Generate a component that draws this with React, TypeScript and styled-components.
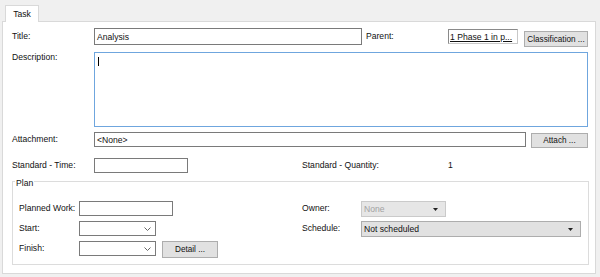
import React from 'react'
import styled, { createGlobalStyle } from 'styled-components'

const GlobalStyle = createGlobalStyle`
  html, body {
    margin : 0;
    padding : 0;
    background : #f0f0f0;
  }
  body {
    font-family : "Liberation Sans", Arial, sans-serif;
    font-size : 8.6px;
    color : #111;
  }
`

const Window = styled.div`
  width : 600px;
  height : 277px;
  box-sizing : border-box;
  padding : 5px 0 0 2px;
  background : #f0f0f0;
`

const TabStrip = styled.div`
  display : flex;
  padding-left : 3px;
  height : 17px;
  margin-bottom : -1px;
  position : relative;
  z-index : 1;
`

const Tab = styled.div`
  width : 34px;
  height : 17px;
  box-sizing : border-box;
  background : #fff;
  border : 1px solid #d9d9d9;
  border-bottom : none;
  display : flex;
  align-items : center;
  justify-content : center;
`

const Panel = styled.div`
  width : 594px;
  height : 253px;
  box-sizing : border-box;
  background : #fff;
  border : 1px solid #d9d9d9;
  padding : 6px 0 0 9px;
`

const Row = styled.div<{ $h: number, $mt?: number }>`
  display : flex;
  align-items : flex-start;
  height : ${props => props.$h}px;
  margin-top : ${props => props.$mt || 0}px;
`

const Label = styled.div<{ $w?: number, $lh?: number, $ml?: number }>`
  width : ${props => props.$w || 82}px;
  flex-shrink : 0;
  line-height : ${props => props.$lh || 15}px;
  margin-left : ${props => props.$ml || 0}px;
  white-space : nowrap;
`

const TextBox = styled.div<{ $w: number, $h?: number }>`
  width : ${props => props.$w}px;
  height : ${props => props.$h || 15}px;
  box-sizing : border-box;
  flex-shrink : 0;
  border : 1px solid #7a7a7a;
  background : #fff;
  padding-left : 2px;
  display : flex;
  align-items : center;
  white-space : nowrap;
`

const LinkBox = styled.div`
  width : 70px;
  height : 15px;
  margin-top : 1px;
  box-sizing : border-box;
  border : 1px solid #8a8a8a;
  border-right-color : #c8c8c8;
  border-bottom-color : #c8c8c8;
  padding-left : 1px;
  display : flex;
  align-items : center;
  text-decoration : underline;
  white-space : nowrap;
  overflow : hidden;
`

const Button = styled.button<{ $w: number, $h?: number, $mt?: number, $ml?: number }>`
  width : ${props => props.$w}px;
  height : ${props => props.$h || 16}px;
  margin : ${props => props.$mt || 0}px 0 0 ${props => props.$ml || 0}px;
  padding : 0;
  flex-shrink : 0;
  box-sizing : border-box;
  background : #e1e1e1;
  border : 1px solid #adadad;
  font-family : inherit;
  font-size : 8.2px;
  color : #111;
  white-space : nowrap;
`

const TextArea = styled.div`
  width : 494px;
  height : 75px;
  box-sizing : border-box;
  border : 1px solid #6fa6de;
  background : #fff;
  padding : 4px 3px;
`

const Caret = styled.span`
  display : block;
  width : 1px;
  height : 9px;
  background : #000;
`

const Value = styled.div`
  line-height : 15px;
`

const GroupBox = styled.div`
  position : relative;
  width : 577px;
  height : 84px;
  margin-top : 8px;
  box-sizing : border-box;
  border : 1px solid #dcdcdc;
  padding : 19px 0 0 6px;
`

const Caption = styled.div`
  position : absolute;
  top : -4px;
  left : 2px;
  padding : 0 1px;
  background : #fff;
  line-height : 11px;
`

const PlanGrid = styled.div`
  display : grid;
  grid-template-columns : 283px 1fr;
  grid-template-rows : 15px 15px 17px;
  row-gap : 5px;
`

const Cell = styled.div`
  display : flex;
  align-items : flex-start;
`

const Combo = styled.div<{ $w: number, $kind?: 'edit' | 'list' | 'disabled' }>`
  width : ${props => props.$w}px;
  height : ${props => props.$kind === 'edit' ? 15 : 16}px;
  box-sizing : border-box;
  flex-shrink : 0;
  display : flex;
  align-items : center;
  justify-content : space-between;
  padding : 0 ${props => props.$kind === 'edit' ? 4 : 7}px 0 2px;
  background : ${props => props.$kind === 'disabled' ? '#e6e6e6' : props.$kind === 'list' ? '#e1e1e1' : '#fff'};
  border : 1px solid ${props => props.$kind === 'disabled' ? '#cacaca' : props.$kind === 'list' ? '#adadad' : '#7a7a7a'};
  color : ${props => props.$kind === 'disabled' ? '#a2a2a2' : '#111'};
  white-space : nowrap;
`

const Chevron = () => (
  <svg width="7" height="4" viewBox="0 0 7 4">
    <polyline points="0.5,0.5 3.5,3.5 6.5,0.5" fill="none" stroke="#666" strokeWidth="1" />
  </svg>
)

const Triangle = () => (
  <svg width="5" height="3" viewBox="0 0 5 3">
    <polygon points="0,0 5,0 2.5,3" fill="#222" />
  </svg>
)

function App() {
  return (
    <>
      <GlobalStyle />
      <Window>
        <TabStrip>
          <Tab>Task</Tab>
        </TabStrip>
        <Panel>
          <Row $h={19}>
            <Label $lh={17}>Title:</Label>
            <TextBox $w={268} $h={17}>Analysis</TextBox>
            <Label $lh={17} $ml={4}>Parent:</Label>
            <LinkBox>1 Phase 1 in p...</LinkBox>
            <Button $w={64} $mt={3} $ml={6}>Classification ...</Button>
          </Row>
          <Row $h={75} $mt={5}>
            <Label $lh={11}>Description:</Label>
            <TextArea><Caret /></TextArea>
          </Row>
          <Row $h={17} $mt={5}>
            <Label>Attachment:</Label>
            <TextBox $w={432}>&lt;None&gt;</TextBox>
            <Button $w={57} $h={15} $mt={1} $ml={5}>Attach ...</Button>
          </Row>
          <Row $h={15} $mt={9}>
            <Label>Standard - Time:</Label>
            <TextBox $w={94} />
            <Label $w={146} $ml={114}>Standard - Quantity:</Label>
            <Value>1</Value>
          </Row>
          <GroupBox>
            <Caption>Plan</Caption>
            <PlanGrid>
              <Cell>
                <Label $w={60}>Planned Work:</Label>
                <TextBox $w={94} />
              </Cell>
              <Cell>
                <Label $w={59}>Owner:</Label>
                <Combo $w={85} $kind="disabled">None<Triangle /></Combo>
              </Cell>
              <Cell>
                <Label $w={60}>Start:</Label>
                <Combo $w={77} $kind="edit"><span /><Chevron /></Combo>
              </Cell>
              <Cell>
                <Label $w={59}>Schedule:</Label>
                <Combo $w={220} $kind="list">Not scheduled<Triangle /></Combo>
              </Cell>
              <Cell>
                <Label $w={60}>Finish:</Label>
                <Combo $w={77} $kind="edit"><span /><Chevron /></Combo>
                <Button $w={56} $h={17} $ml={6}>Detail ...</Button>
              </Cell>
            </PlanGrid>
          </GroupBox>
        </Panel>
      </Window>
    </>
  )
}

export default App
